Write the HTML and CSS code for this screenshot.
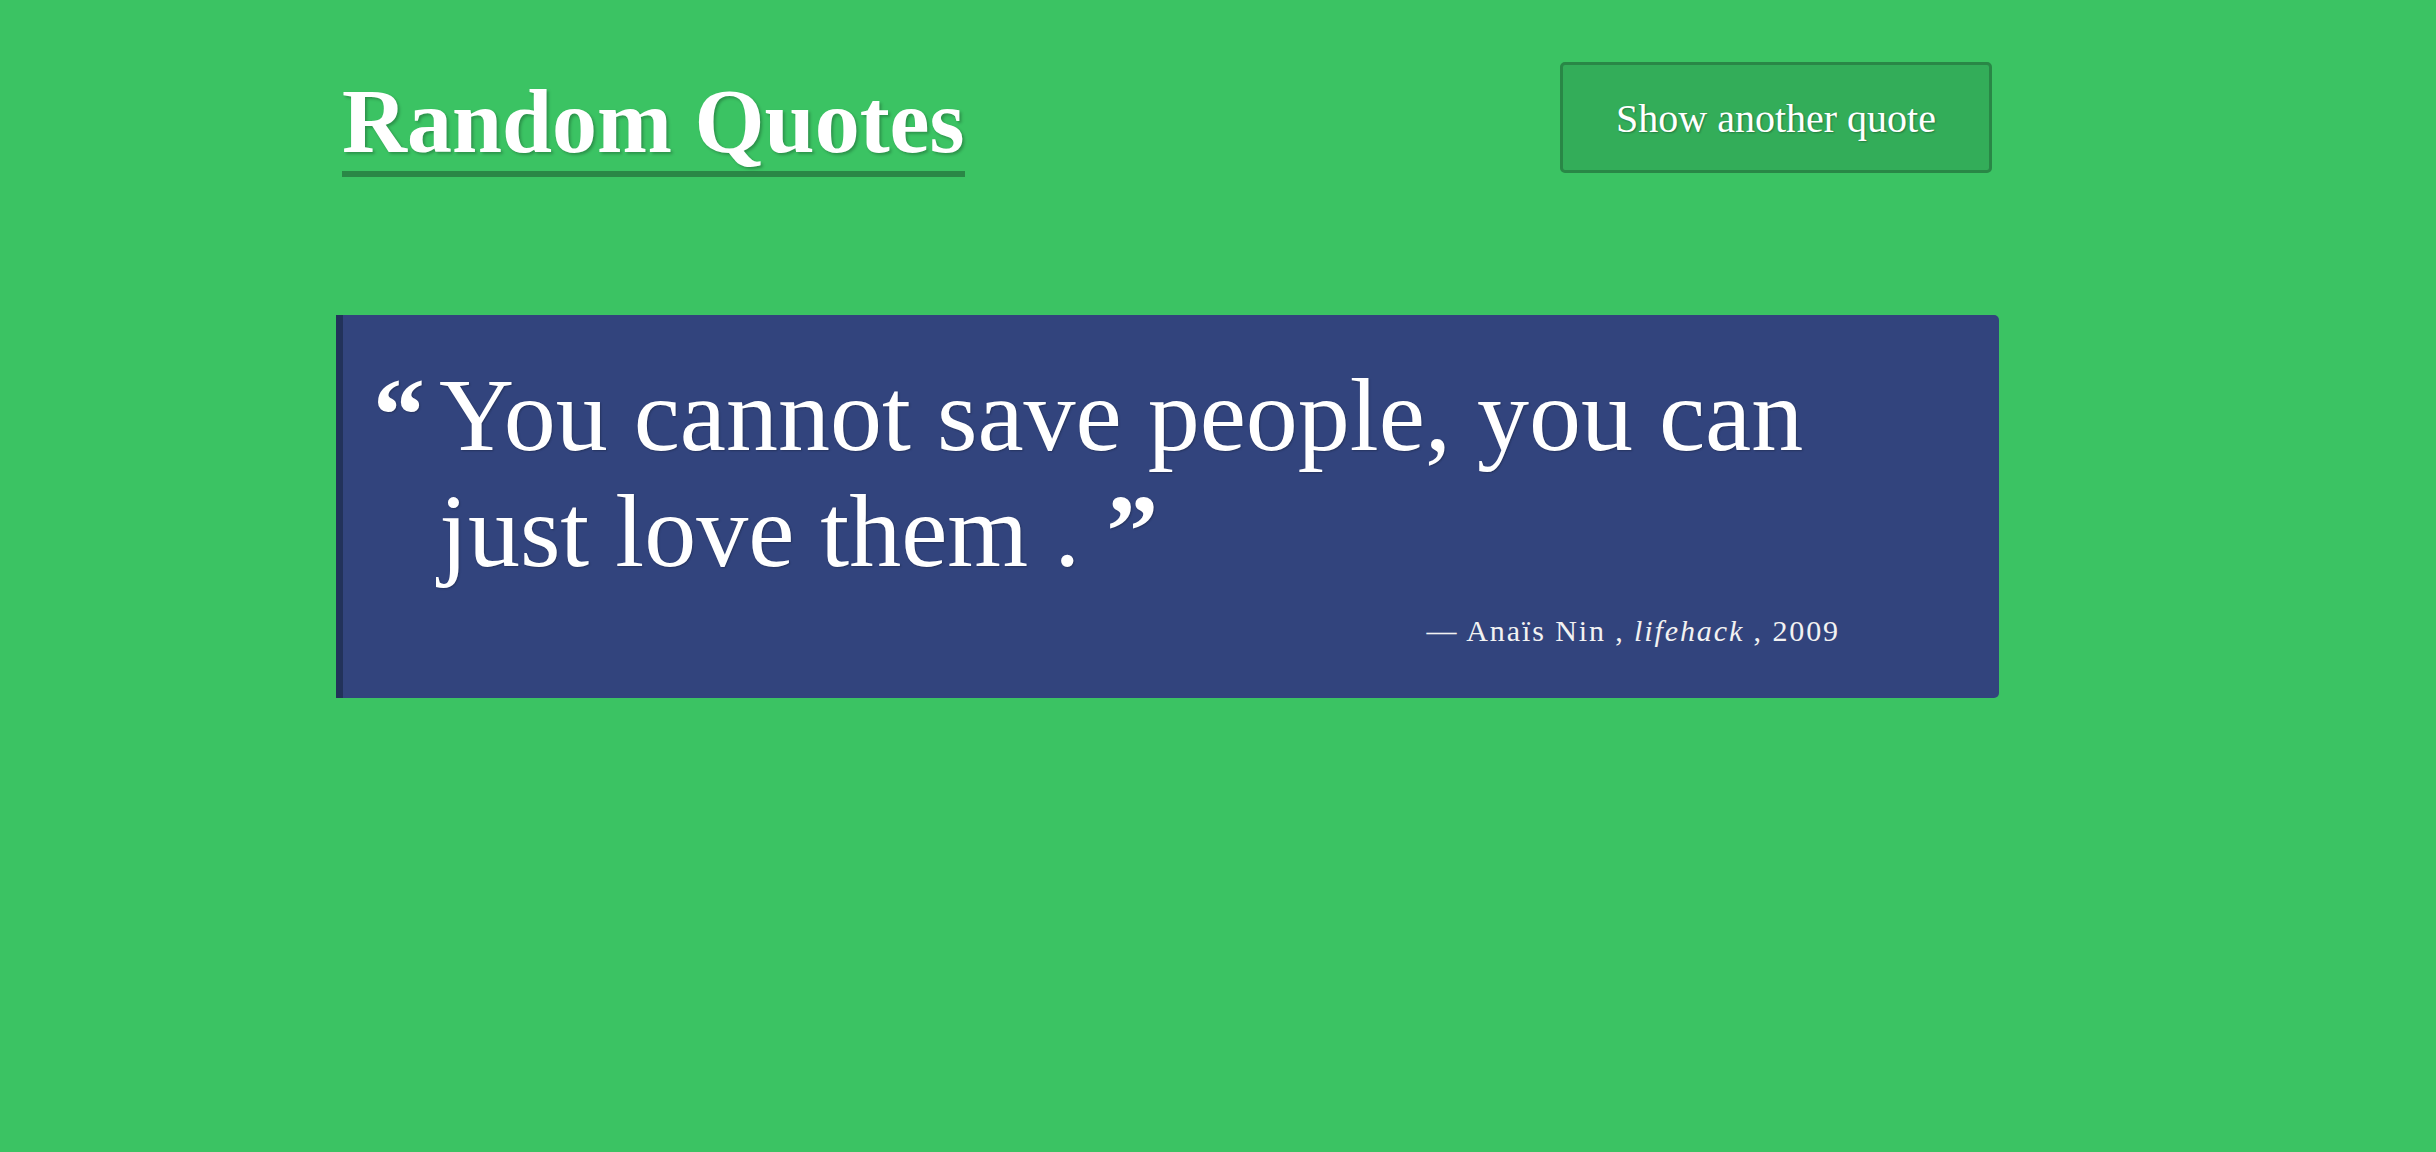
FILE: index.html
```html
<!DOCTYPE html>
<html lang="en">
<head>
<meta charset="utf-8">
<title>Random Quotes</title>
<link rel="stylesheet" href="styles.css">
</head>
<body>
<div class="page">
  <header class="header">
    <h1 class="title">Random Quotes</h1>
    <button class="btn" type="button">Show another quote</button>
  </header>
  <blockquote class="quote">
    <div class="qmark">&ldquo;</div>
    <div class="qbody">
      <p class="qtext"><span class="qline">You cannot save people, you can</span> <span class="qline">just love them .</span> <span class="qclose">&rdquo;</span></p>
      <p class="cite">&mdash; Anaïs Nin , <em>lifehack</em> , 2009</p>
    </div>
  </blockquote>
</div>
</body>
</html>
```
FILE: styles.css
```css
html, body {
  margin: 0;
  padding: 0;
}
body {
  background: #3bc363;
  color: #ffffff;
  font-family: "Liberation Serif", "Times New Roman", serif;
  min-height: 1152px;
}
.page {
  padding-left: 336px;
  width: 1663px;
}
.header {
  display: flex;
  justify-content: space-between;
  align-items: flex-start;
  padding: 62px 7px 0 6px;
}
.title {
  margin: 15px 0 0 0;
  font-size: 90px;
  line-height: 90px;
  font-weight: 700;
  padding-bottom: 4px;
  border-bottom: 6px solid #2a8746;
  text-shadow: 2px 2px 3px rgba(0, 0, 0, 0.25);
}
.btn {
  width: 432px;
  height: 111px;
  box-sizing: border-box;
  background: #33ad59;
  border: 3px solid #298746;
  border-radius: 5px;
  color: #ffffff;
  font-family: "Liberation Serif", "Times New Roman", serif;
  font-size: 40px;
  line-height: 46px;
  padding: 3px 0 0 0;
  text-shadow: 1px 1px 2px rgba(0, 0, 0, 0.3);
}
.quote {
  display: flex;
  margin: 138px 0 0 0;
  box-sizing: border-box;
  width: 1663px;
  height: 383px;
  background: #32447d;
  border-left: 7px solid #22325a;
  border-radius: 0 5px 5px 0;
  padding: 42px 0 0 30px;
}
.qmark {
  width: 66px;
  flex: none;
  font-size: 104px;
  line-height: 116px;
  font-weight: 700;
  text-shadow: 1px 1px 2px rgba(0, 0, 0, 0.25);
}
.qbody {
  width: 1430px;
}
.qtext {
  margin: 0;
  font-size: 104px;
  line-height: 116px;
  text-shadow: 1px 1px 2px rgba(0, 0, 0, 0.25);
}
.qclose {
  font-weight: 700;
}
.cite {
  margin: 24px 0 0 0;
  text-align: right;
  padding-right: 29px;
  font-size: 30px;
  line-height: 36px;
  letter-spacing: 1.9px;
  color: #f2f2f2;
}
.cite em {
  font-style: italic;
}
```
